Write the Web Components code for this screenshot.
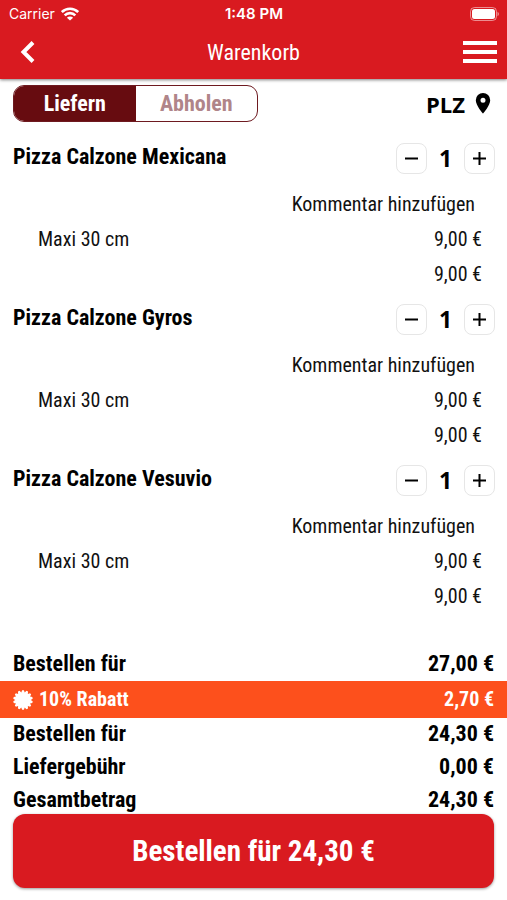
<!DOCTYPE html>
<html lang="de">
<head>
<meta charset="utf-8">
<meta name="viewport" content="width=device-width, initial-scale=1">
<title>Warenkorb</title>
<style>
  body {
    margin: 0;
    background: #fff;
    color: #000;
    font-family: "Roboto Condensed", "Liberation Sans Narrow", Roboto, sans-serif;
  }
</style>
</head>
<body>
<cart-page>
  <status-bar slot="header" carrier="Carrier" time="1:48 PM"></status-bar>
  <nav-bar slot="header">Warenkorb</nav-bar>
  <delivery-options></delivery-options>
  <cart-item name="Pizza Calzone Mexicana" option="Maxi 30 cm" price="9,00 €"></cart-item>
  <cart-item name="Pizza Calzone Gyros" option="Maxi 30 cm" price="9,00 €"></cart-item>
  <cart-item name="Pizza Calzone Vesuvio" option="Maxi 30 cm" price="9,00 €"></cart-item>
  <summary-row slot="summary" value="27,00 €">Bestellen für</summary-row>
  <discount-row slot="summary" value="2,70 €">10% Rabatt</discount-row>
  <summary-row slot="summary" value="24,30 €">Bestellen für</summary-row>
  <summary-row slot="summary" value="0,00 €">Liefergebühr</summary-row>
  <summary-row slot="summary" value="24,30 €">Gesamtbetrag</summary-row>
  <order-button slot="footer">Bestellen für 24,30 €</order-button>
</cart-page>

<script>
class CartPage extends HTMLElement {
  constructor() {
    super();
    this.attachShadow({ mode: 'open' });
    this.shadowRoot.innerHTML = `
      <style>
        :host {
          display: flex;
          flex-direction: column;
          min-height: 100vh;
        }

        header {
          background: #d91a20;
          color: #fff;
          box-shadow: 0 1px 3px rgba(0, 0, 0, .5);
        }

        .summary {
          display: flex;
          flex-direction: column;
          gap: 5px;
          margin-top: auto;
        }

        footer {
          padding: 0 13px 12px;
        }
      </style>
      <header><slot name="header"></slot></header>
      <main><slot></slot></main>
      <div class="summary"><slot name="summary"></slot></div>
      <footer><slot name="footer"></slot></footer>
    `;
  }
}

class StatusBar extends HTMLElement {
  constructor() {
    super();
    this.attachShadow({ mode: 'open' });
    this.shadowRoot.innerHTML = `
      <style>
        :host {
          display: grid;
          grid-template-columns: 1fr auto 1fr;
          align-items: center;
          height: 27px;
          padding: 0 8px 0 9px;
          font: 14px/27px Inter, sans-serif;
        }

        .carrier {
          display: flex;
          align-items: center;
          gap: 6px;
        }

        .time {
          font-size: 15px;
          font-weight: 600;
        }

        .battery {
          justify-self: end;
        }

        svg {
          display: block;
        }
      </style>
      <span class="carrier">
        <span class="name"></span>
        <svg width="18" height="14" viewBox="0 0 18 14" fill="none" stroke="#fff" stroke-width="2.6">
          <path d="M.8 5.1a11.6 11.6 0 0 1 16.4 0M3.7 8.3a7.5 7.5 0 0 1 10.6 0"/>
          <path d="M9 13.6 5.9 10.7a4.4 4.4 0 0 1 6.2 0z" fill="#fff" stroke="none"/>
        </svg>
      </span>
      <span class="time"></span>
      <svg class="battery" width="29" height="14" viewBox="0 0 29 14">
        <rect x=".5" y=".5" width="26" height="13" rx="4" fill="none" stroke="#fff" stroke-opacity=".5"/>
        <rect x="2" y="2" width="23" height="10" rx="2.5" fill="#fff"/>
        <path d="M27.5 4.8v4.4q1.5-.8 1.5-2.2t-1.5-2.2" fill="#fff" opacity=".5"/>
      </svg>
    `;
  }

  connectedCallback() {
    this.shadowRoot.querySelector('.name').textContent = this.getAttribute('carrier');
    this.shadowRoot.querySelector('.time').textContent = this.getAttribute('time');
  }
}

class NavBar extends HTMLElement {
  constructor() {
    super();
    this.attachShadow({ mode: 'open' });
    this.shadowRoot.innerHTML = `
      <style>
        :host {
          display: grid;
          grid-template-columns: 1fr auto 1fr;
          align-items: center;
          height: 52px;
          padding: 0 10px 2px;
          box-sizing: border-box;
        }

        h1 {
          margin: 0;
          font-size: 22px;
          font-weight: 400;
        }

        button {
          padding: 0;
          border: 0;
          background: none;
          color: inherit;
        }

        .back {
          justify-self: start;
          padding: 0 10px;
        }

        .menu {
          justify-self: end;
        }

        svg {
          display: block;
        }
      </style>
      <button class="back" aria-label="Zurück">
        <svg width="16" height="24" viewBox="0 0 16 24" fill="none" stroke="currentColor" stroke-width="4">
          <path d="M13 2.5 3.5 12 13 21.5"/>
        </svg>
      </button>
      <h1><slot></slot></h1>
      <button class="menu" aria-label="Menü">
        <svg width="34" height="24" viewBox="0 0 34 24" fill="currentColor">
          <path d="M0 1h34v4H0zM0 10h34v4H0zM0 19h34v4H0z"/>
        </svg>
      </button>
    `;
  }
}

class DeliveryOptions extends HTMLElement {
  constructor() {
    super();
    this.attachShadow({ mode: 'open' });
    this.shadowRoot.innerHTML = `
      <style>
        :host {
          display: flex;
          justify-content: space-between;
          align-items: center;
          padding: 6px 15px 15px 13px;
        }

        .toggle {
          display: grid;
          grid-template-columns: 1fr 1fr;
          width: 245px;
          height: 37px;
          box-sizing: border-box;
          border: 1px solid #6e1a20;
          border-radius: 11px;
          overflow: hidden;
        }

        button {
          padding: 0;
          border: 0;
          background: none;
          color: #b08589;
          font: bold 22px/26px "Roboto Condensed", "Liberation Sans Narrow", Roboto, sans-serif;
        }

        .toggle button[aria-pressed="true"] {
          background: #670c10;
          color: #fff;
        }

        .plz {
          display: flex;
          align-items: center;
          gap: 9px;
          color: #000;
          font: bold 22px/26px "Open Sans", "Noto Sans", sans-serif;
        }
      </style>
      <div class="toggle">
        <button aria-pressed="true">Liefern</button>
        <button aria-pressed="false">Abholen</button>
      </div>
      <button class="plz">
        PLZ
        <svg width="18" height="24" viewBox="0 0 18 24">
          <path fill-rule="evenodd" d="M9 1a7.2 7.2 0 0 0-7.200 7.200C1.800 13.500 9 21.500 9 21.500s7.200-8 7.200-13.300A7.200 7.200 0 0 0 9 1zm0 4.700a2.500 2.500 0 1 1 0 5 2.500 2.500 0 0 1 0-5z"/>
        </svg>
      </button>
    `;

    this.buttons = this.shadowRoot.querySelectorAll('.toggle button');
    this.buttons.forEach((button) => {
      button.addEventListener('click', () => this.select(button));
    });
  }

  select(selected) {
    this.buttons.forEach((button) => {
      button.setAttribute('aria-pressed', button === selected);
    });
  }
}

class QuantityStepper extends HTMLElement {
  constructor() {
    super();
    this.count = 1;
    this.attachShadow({ mode: 'open' });
    this.shadowRoot.innerHTML = `
      <style>
        :host {
          display: flex;
          align-items: center;
        }

        button {
          display: grid;
          place-items: center;
          width: 31px;
          height: 31px;
          padding: 0;
          border: 1px solid #e6e6e6;
          border-radius: 8px;
          background: #fff;
          color: #000;
        }

        output {
          width: 37px;
          text-align: center;
          font: bold 23px/31px "Open Sans", "Noto Sans", sans-serif;
        }

        svg {
          display: block;
          fill: none;
          stroke: currentColor;
          stroke-width: 2;
        }
      </style>
      <button class="minus" aria-label="Weniger">
        <svg width="15" height="15" viewBox="0 0 15 15"><path d="M1 7.5h13"/></svg>
      </button>
      <output>1</output>
      <button class="plus" aria-label="Mehr">
        <svg width="15" height="15" viewBox="0 0 15 15"><path d="M1 7.5h13M7.5 1v13"/></svg>
      </button>
    `;
  }

  connectedCallback() {
    this.output = this.shadowRoot.querySelector('output');
    this.shadowRoot.querySelector('.minus').addEventListener('click', () => this.change(-1));
    this.shadowRoot.querySelector('.plus').addEventListener('click', () => this.change(1));
  }

  change(step) {
    this.count = Math.max(0, this.count + step);
    this.output.textContent = this.count;
  }
}

class CartItem extends HTMLElement {
  constructor() {
    super();
    this.attachShadow({ mode: 'open' });
    this.shadowRoot.innerHTML = `
      <style>
        :host {
          display: block;
          padding: 6px 12px 6px 13px;
          font-size: 20px;
          line-height: 35px;
        }

        .top {
          display: flex;
          justify-content: space-between;
          align-items: flex-start;
          height: 44px;
        }

        h2 {
          margin: 0;
          font-size: 22px;
          line-height: 27px;
        }

        .comment {
          display: block;
          margin-left: auto;
          padding: 0 20px 0 0;
          border: 0;
          background: none;
          color: #111;
          font: inherit;
        }

        .row {
          display: flex;
          justify-content: space-between;
          padding: 0 13px 0 25px;
          color: #111;
        }

        .total {
          justify-content: flex-end;
        }
      </style>
      <div class="top">
        <h2></h2>
        <quantity-stepper></quantity-stepper>
      </div>
      <button class="comment">Kommentar hinzufügen</button>
      <div class="row"><span class="option"></span><span class="price"></span></div>
      <div class="row total"><span class="price"></span></div>
    `;
  }

  connectedCallback() {
    this.shadowRoot.querySelector('h2').textContent = this.getAttribute('name');
    this.shadowRoot.querySelector('.option').textContent = this.getAttribute('option');
    this.shadowRoot.querySelectorAll('.price').forEach((price) => {
      price.textContent = this.getAttribute('price');
    });
  }
}

class SummaryRow extends HTMLElement {
  constructor() {
    super();
    this.attachShadow({ mode: 'open' });
    this.shadowRoot.innerHTML = `
      <style>
        :host {
          display: flex;
          justify-content: space-between;
          padding: 0 13px;
          font-size: 22px;
          font-weight: bold;
          line-height: 28px;
        }
      </style>
      <span><slot></slot></span>
      <span class="value"></span>
    `;
  }

  connectedCallback() {
    this.shadowRoot.querySelector('.value').textContent = this.getAttribute('value');
  }
}

class DiscountRow extends HTMLElement {
  constructor() {
    super();
    this.attachShadow({ mode: 'open' });
    this.shadowRoot.innerHTML = `
      <style>
        :host {
          display: flex;
          align-items: center;
          gap: 6px;
          margin: -2px 0 -3px;
          padding: 0 13px;
          background: #fd501c;
          color: #fff;
          font-size: 20px;
          font-weight: bold;
          line-height: 37px;
        }

        .value {
          margin-left: auto;
        }
      </style>
      <svg width="20" height="20" viewBox="-10 -10 20 20" fill="#fff"><path/></svg>
      <span><slot></slot></span>
      <span class="value"></span>
    `;
  }

  connectedCallback() {
    this.shadowRoot.querySelector('.value').textContent = this.getAttribute('value');
    this.shadowRoot.querySelector('path').setAttribute('d', this.badgePath(14));
  }

  // starburst with flat-tipped teeth
  badgePath(teeth) {
    const points = [];
    for (let i = 0; i < teeth; i++) {
      [[0, 7.8], [.3, 9.8], [.7, 9.8]].forEach(([offset, radius]) => {
        const angle = (i + offset) / teeth * Math.PI * 2;
        points.push(`${(Math.cos(angle) * radius).toFixed(2)} ${(Math.sin(angle) * radius).toFixed(2)}`);
      });
    }
    return `M${points.join('L')}Z`;
  }
}

class OrderButton extends HTMLElement {
  constructor() {
    super();
    this.attachShadow({ mode: 'open' });
    this.shadowRoot.innerHTML = `
      <style>
        :host {
          display: block;
        }

        button {
          display: block;
          width: 100%;
          height: 74px;
          border: 0;
          border-radius: 12px;
          background: #d91a20;
          box-shadow: 0 1px 3px rgba(0, 0, 0, .4);
          color: #fff;
          font: inherit;
          font-size: 29px;
          font-weight: bold;
        }
      </style>
      <button><slot></slot></button>
    `;
  }
}

customElements.define('cart-page', CartPage);
customElements.define('status-bar', StatusBar);
customElements.define('nav-bar', NavBar);
customElements.define('delivery-options', DeliveryOptions);
customElements.define('quantity-stepper', QuantityStepper);
customElements.define('cart-item', CartItem);
customElements.define('summary-row', SummaryRow);
customElements.define('discount-row', DiscountRow);
customElements.define('order-button', OrderButton);
</script>
</body>
</html>
